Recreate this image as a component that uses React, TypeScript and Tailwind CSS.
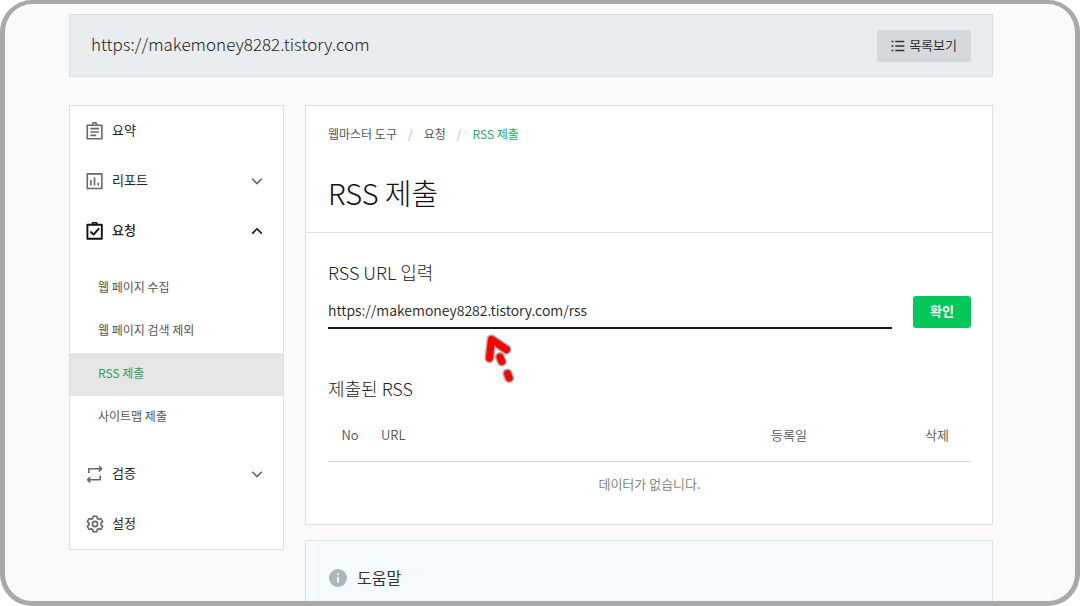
import React, { useState } from 'react';
import clsx from 'clsx';

type IconName = 'summary' | 'report' | 'request' | 'verify' | 'settings';

interface MenuEntry {
  label: string;
  icon: IconName;
  open?: boolean;
  children?: string[];
}

const menu: MenuEntry[] = [
  { label: '요약', icon: 'summary' },
  { label: '리포트', icon: 'report', children: [] },
  {
    label: '요청',
    icon: 'request',
    open: true,
    children: ['웹 페이지 수집', '웹 페이지 검색 제외', 'RSS 제출', '사이트맵 제출'],
  },
  { label: '검증', icon: 'verify', children: [] },
  { label: '설정', icon: 'settings' },
];

const MenuIcon = ({ name }: { name: IconName }) => (
  <svg
    viewBox="0 0 18 18"
    fill="none"
    stroke="currentColor"
    strokeWidth="1.6"
    strokeLinejoin="round"
    className="h-[18px] w-[18px] shrink-0"
    aria-hidden="true"
  >
    {name === 'summary' && (
      <>
        <path d="M1.3 3.2h14.6v13.6H1.3z" />
        <path d="M6.4 2.8a2.2 2.2 0 0 1 4.4 0" />
        <path d="M4.4 6.6h8.6M4.4 10h8.6M4.4 13.4h5.8" />
      </>
    )}
    {name === 'report' && (
      <>
        <path d="M1.3 1.9h14.6v14.6H1.3z" />
        <path d="M4.9 8v5.6M8.5 5.2v8.4M12.2 10.8v2.8" />
      </>
    )}
    {name === 'request' && (
      <>
        <path d="M1.4 2.8h14.4v14H1.4z" strokeWidth="1.9" />
        <path d="M6.4 2.4a2.2 2.2 0 0 1 4.4 0" strokeWidth="1.9" />
        <path d="M4.4 9.500l3.100 3.100 5.600-6.200" strokeWidth="1.9" />
      </>
    )}
    {name === 'verify' && (
      <>
        <path d="M2.8 8V3.800h12.800M13 1.200l2.600 2.600L13 6.400" />
        <path d="M14.200 10.400v4.400H1.600M4.200 12.200l-2.600 2.600 2.600 2.600" />
      </>
    )}
    {name === 'settings' && (
      <>
        <path d="M7.2 1.2h3.6l.5 2.3 1.4.8 2.2-.7 1.8 3L15 8.200v1.600l1.700 1.600-1.800 3-2.200-.7-1.400.8-.5 2.300H7.200l-.5-2.300-1.400-.8-2.200.7-1.800-3L3 9.800V8.200L1.300 6.600l1.800-3 2.200.7 1.400-.8z" />
        <circle cx="9" cy="9" r="2.6" />
      </>
    )}
  </svg>
);

const Chevron = ({ up }: { up?: boolean }) => (
  <svg viewBox="0 0 12 12" fill="none" stroke="currentColor" strokeWidth="1.6" className="ml-auto h-3 w-3" aria-hidden="true">
    <path d={up ? 'M1.2 8.6L6 3.8l4.8 4.8' : 'M1.2 3.8L6 8.600l4.800-4.800'} />
  </svg>
);

const Sidebar = () => (
  <nav className="w-[215px] shrink-0 self-start border border-[#e0e0e0] bg-white">
    {menu.map((entry) => (
      <div key={entry.label}>
        <button
          type="button"
          aria-expanded={entry.children ? !!entry.open : undefined}
          className={clsx(
            'flex h-[50px] w-full items-center gap-2 pr-5 pl-4 text-[13px]',
            entry.open ? 'font-medium text-[#111111]' : 'text-[#666666]'
          )}
        >
          <MenuIcon name={entry.icon} />
          <span className="pb-[2px] text-[#222222]">{entry.label}</span>
          {entry.children && <Chevron up={entry.open} />}
        </button>
        {entry.open && entry.children && (
          <ul className="pt-[11px] pb-[10px]">
            {entry.children.map((child) => (
              <li key={child}>
                <a
                  href="#"
                  className={clsx(
                    'flex h-[43px] items-center pb-[3px] pl-7 text-[12px]',
                    child === 'RSS 제출' ? 'bg-[#e5e5e5] text-[#2b9e5c]' : 'text-[#555555]'
                  )}
                >
                  {child}
                </a>
              </li>
            ))}
          </ul>
        )}
      </div>
    ))}
  </nav>
);

// dashed arrow that points at the feed address
const PointerArrow = () => (
  <svg viewBox="0 0 40 56" fill="none" strokeLinecap="round" strokeLinejoin="round" className="absolute top-full left-[152px] h-14 w-10" aria-hidden="true">
    <g stroke="#a9a9a9" strokeWidth="10">
      <path d="M9.5 29L11.5 10.5 26.5 20.5" />
      <path d="M20 28l1.8 4.5M27.500 44.500l1.700 4.500" />
    </g>
    <g stroke="#ff0000" strokeWidth="7">
      <path d="M9.5 29L11.5 10.5 26.5 20.5" />
      <path d="M20 28l1.8 4.5M27.500 44.500l1.700 4.500" />
    </g>
  </svg>
);

const RssPanel = () => {
  const [url, setUrl] = useState('https://makemoney8282.tistory.com/rss');

  return (
    <section className="border border-[#e0e0e0] bg-white">
      <div className="border-b border-[#e0e0e0] px-[22px] pt-[18px] pb-[19px]">
        <ol className="flex h-5 items-center gap-[11px] text-[12px] text-[#555555]">
          <li><a href="#">웹마스터 도구</a></li>
          <li className="text-[#bbbbbb]">/</li>
          <li><a href="#">요청</a></li>
          <li className="text-[#bbbbbb]">/</li>
          <li className="text-[#2fa56b]">RSS 제출</li>
        </ol>
        <h1 className="mt-[27px] text-[29px] leading-[42px] font-light text-[#111111]">RSS 제출</h1>
      </div>

      <div className="pt-[27px] pr-[21px] pb-[19px] pl-[22px]">
        <form onSubmit={(e) => e.preventDefault()}>
          <label htmlFor="rss-url" className="block text-[18px] leading-6 font-light text-[#222222]">
            RSS URL 입력
          </label>
          <div className="mt-3 flex gap-[21px]">
            <div className="relative flex-1">
              <input
                id="rss-url"
                type="text"
                value={url}
                onChange={(e) => setUrl(e.target.value)}
                className="block h-[33px] w-full border-b-2 border-[#1e1a1b] pb-[3px] text-[14px] font-[350] text-[#222222] outline-none"
              />
              <PointerArrow />
            </div>
            <button type="submit" className="h-8 w-[58px] rounded-[3px] bg-[#03c75a] pb-[2px] text-[13px] font-bold text-white">
              확인
            </button>
          </div>
        </form>

        <h2 className="mt-[47px] text-[18px] leading-6 font-light text-[#222222]">제출된 RSS</h2>
        <table className="mt-2 w-full text-[13px] font-[350] text-[#555555]">
          <thead>
            <tr className="h-[53px] border-b border-[#d5d5d5]">
              <th className="w-11 font-[350]">No</th>
              <th className="pl-[9px] text-left font-[350]">URL</th>
              <th className="w-[228px] font-[350]">등록일</th>
              <th className="w-[68px] font-[350]">삭제</th>
            </tr>
          </thead>
          <tbody>
            <tr className="h-11">
              <td colSpan={4} className="text-center text-[#777777]">데이터가 없습니다.</td>
            </tr>
          </tbody>
        </table>
      </div>
    </section>
  );
};

const App: React.FC = () => {
  return (
    <div className="h-screen overflow-hidden bg-white font-['Noto_Sans_CJK_KR',sans-serif]">
      <div className="h-full overflow-hidden rounded-[32px] border-[5px] border-t-4 border-[#a9a9a9] bg-[#fafafa] pt-[10px] pr-[82px] pl-16">
        <header className="flex h-[63px] items-center justify-between border border-[#dcdfe1] bg-[#eaedf0] px-[21px]">
          <span className="pb-[3px] text-[17px] font-light text-[#222222]">https://makemoney8282.tistory.com</span>
          <button type="button" className="flex h-8 items-center gap-1 rounded-[3px] bg-[#d5d9de] px-[14px] text-[13px] text-[#333333]">
            <svg viewBox="0 0 14 12" className="h-3 w-[14px]" fill="none" stroke="currentColor" strokeWidth="1.4" aria-hidden="true">
              <path d="M.5 1.5h2M4.300 1.500h9M.5 6h2M4.300 6h9M.5 10.500h2M4.300 10.500h9" />
            </svg>
            <span className="pb-[2px]">목록보기</span>
          </button>
        </header>

        <div className="mt-7 flex gap-[21px]">
          <Sidebar />
          <main className="min-w-0 flex-1 space-y-[15px]">
            <RssPanel />
            <section className="border border-[#dce3e6] bg-[#f4fafd] px-[23px] pt-6 pb-10">
              <h2 className="flex items-center gap-[10px] text-[16px] leading-6 text-[#333333]">
                <svg viewBox="0 0 18 18" className="h-[18px] w-[18px]" aria-hidden="true">
                  <circle cx="9" cy="9" r="9" fill="#a9b7bd" />
                  <path d="M9 4.2v2M9 7.8v6" stroke="#f4fafd" strokeWidth="1.8" />
                </svg>
                <span className="pb-[2px]">도움말</span>
              </h2>
            </section>
          </main>
        </div>
      </div>
    </div>
  );
};

export default App;
